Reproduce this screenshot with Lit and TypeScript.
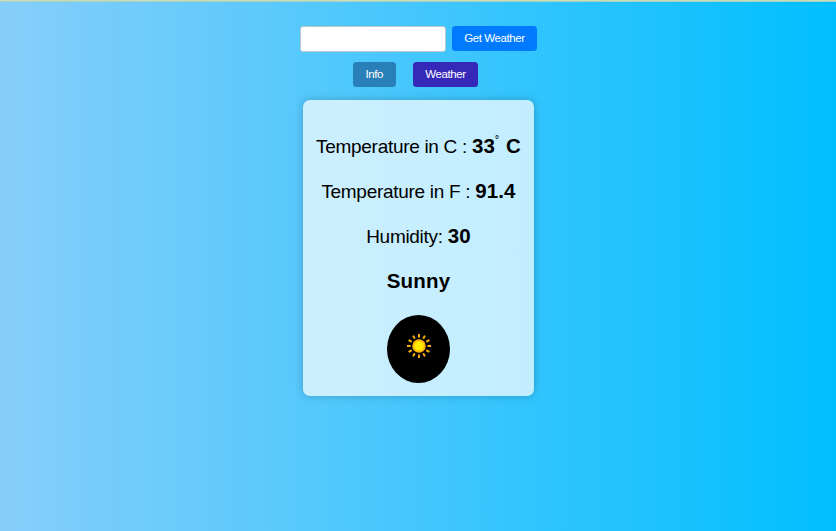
import { LitElement, html, css, svg } from "lit";
import { customElement, property } from "lit/decorators.js";

@customElement("sun-icon")
class SunIcon extends LitElement {
  static styles = css`
    :host { display: flex; justify-content: center; align-items: flex-start; box-sizing: border-box;
      width: 63px; height: 68px; padding-top: 18px; border-radius: 50%; background: #000; }
    svg { display: block; }
  `;
  render() {
    const rays = Array.from({ length: 12 }, (_, i) => i * 30);
    return html`<svg width="26" height="26" viewBox="-13 -13 26 26">
      ${rays.map((a) => svg`<rect x="-1" y="-12" width="2" height="3.6" rx="0.3" fill="#f9ae0c" transform="rotate(${a})"></rect>`)}
      <circle r="6.8" fill="#ffa90a"></circle>
      <circle r="5.6" fill="#ffc400"></circle>
      <circle r="4.6" fill="#ffea00"></circle>
    </svg>`;
  }
}

@customElement("weather-card")
class WeatherCard extends LitElement {
  @property({ type: Number }) celsius = 33;
  @property({ type: Number }) fahrenheit = 91.4;
  @property({ type: Number }) humidity = 30;
  @property() condition = "Sunny";

  static styles = css`
    :host { display: flex; flex-direction: column; align-items: center; box-sizing: border-box;
      width: 231.5px; height: 295.5px; padding-top: 33px; border-radius: 7px;
      background: rgba(255, 255, 255, 0.7); box-shadow: 0 0 8px rgba(0, 0, 0, 0.22); }
    .line { height: 25px; margin-bottom: 20px; line-height: 25px; font-size: 19px; letter-spacing: -0.3px;
      white-space: pre; color: #000; }
    .value { font-size: 20.5px; font-weight: bold; letter-spacing: 0.15px; }
    .degree { font-size: 10px; line-height: 0; vertical-align: 10px; letter-spacing: 1px; color: #123; }
    sun-icon { margin-top: 1.5px; }
  `;
  render() {
    return html`
      <div class="line">Temperature in C : <span class="value">${this.celsius}<span class="degree">°</span> C</span></div>
      <div class="line">Temperature in F : <span class="value">${this.fahrenheit}</span></div>
      <div class="line">Humidity: <span class="value">${this.humidity}</span></div>
      <div class="line"><span class="value">${this.condition}</span></div>
      <sun-icon></sun-icon>
    `;
  }
}

@customElement("app-root")
class AppRoot extends LitElement {
  static styles = css`
    :host { display: flex; flex-direction: column; align-items: center; box-sizing: border-box;
      height: 531px; padding: 24px 0 0 1px; border-top: 1px solid #c6dfb4; overflow: hidden;
      font-family: "Liberation Sans", Arial, sans-serif;
      background: linear-gradient(#a9cfc4, #a9cfc4) 0 0 / 100% 1px no-repeat, linear-gradient(to right, #87cefa, #00bfff); }
    .row { display: flex; align-items: center; height: 27px; }
    .search { gap: 6px; }
    .tabs { gap: 17px; margin: 9px 0 12px; padding-right: 6.5px; }
    input { box-sizing: border-box; width: 146px; height: 26px; padding: 0 6px; border: 1px solid #bbc6cd;
      border-radius: 3px; outline: none; background: #fff; font: 11px "Liberation Sans", Arial, sans-serif; }
    button { height: 25px; padding: 0 0 1px; border: 0; border-radius: 3.5px; color: #fff;
      font: 11.5px "Liberation Sans", Arial, sans-serif; letter-spacing: -0.4px; }
    .get { width: 85px; background: #007bff; }
    .info { width: 43.5px; background: #2980b9; }
    .weather { width: 65px; background: #3628b9; }
  `;
  render() {
    return html`
      <div class="row search"><input type="text" aria-label="City" /><button class="get">Get Weather</button></div>
      <div class="row tabs"><button class="info">Info</button><button class="weather">Weather</button></div>
      <weather-card></weather-card>
    `;
  }
}
